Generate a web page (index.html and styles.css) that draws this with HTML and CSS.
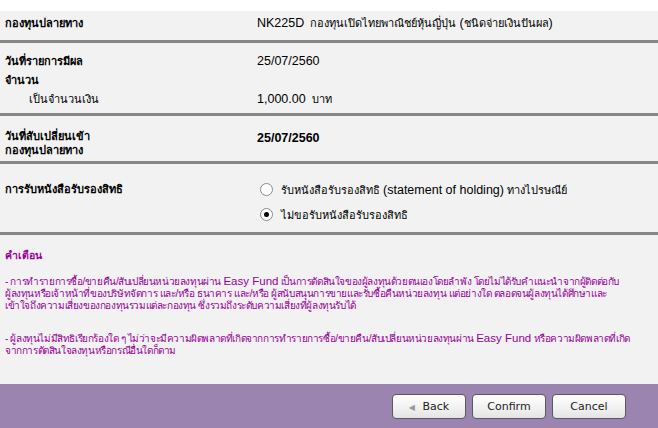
FILE: index.html
```html
<!DOCTYPE html>
<html lang="th">
<head>
  <meta charset="UTF-8" />
  <meta name="viewport" content="width=device-width, initial-scale=1" />
  <title>Easy Fund - ยืนยันการสับเปลี่ยน</title>
  <link rel="stylesheet" href="styles.css">
</head>
<body>
  <div class="page">
    <div class="row row-fund">
      <div class="label">กองทุนปลายทาง</div>
      <div class="value"><span class="latin">NK225D</span>&nbsp; กองทุนเปิดไทยพาณิชย์หุ้นญี่ปุ่น <span class="latin">(</span>ชนิดจ่ายเงินปันผล<span class="latin">)</span></div>
    </div>

    <div class="row row-amount">
      <div class="label">วันที่รายการมีผล</div>
      <div class="value latin">25/07/2560</div>
      <div class="label">จำนวน</div>
      <div class="value"></div>
      <div class="label sub">เป็นจำนวนเงิน</div>
      <div class="value"><span class="latin">1,000.00</span>&nbsp; บาท</div>
    </div>

    <div class="row row-switch">
      <div class="label">วันที่สับเปลี่ยนเข้า<br>กองทุนปลายทาง</div>
      <div class="value latin bold">25/07/2560</div>
    </div>

    <div class="row row-cert">
      <div class="label">การรับหนังสือรับรองสิทธิ</div>
      <div class="options">
        <label class="option"><span class="radio"></span>รับหนังสือรับรองสิทธิ&nbsp;<span class="latin">(statement of holding)</span>&nbsp;ทางไปรษณีย์</label>
        <label class="option"><span class="radio checked"></span>ไม่ขอรับหนังสือรับรองสิทธิ</label>
      </div>
    </div>

    <div class="warning">
      <div class="warning-title">คำเตือน</div>
      <p>- การทำรายการซื้อ/ขายคืน/สับเปลี่ยนหน่วยลงทุนผ่าน <span class="latin">Easy Fund</span> เป็นการตัดสินใจของผู้ลงทุนด้วยตนเองโดยลำพัง โดยไม่ได้รับคำแนะนำจากผู้ติดต่อกับ<br>ผู้ลงทุนหรือเจ้าหน้าที่ของบริษัทจัดการ และ/หรือ ธนาคาร และ/หรือ ผู้สนับสนุนการขายและรับซื้อคืนหน่วยลงทุน แต่อย่างใด ตลอดจนผู้ลงทุนได้ศึกษาและ<br>เข้าใจถึงความเสี่ยงของกองทุนรวมแต่ละกองทุน ซึ่งรวมถึงระดับความเสี่ยงที่ผู้ลงทุนรับได้</p>
      <p>- ผู้ลงทุนไม่มีสิทธิเรียกร้องใด ๆ ไม่ว่าจะมีความผิดพลาดที่เกิดจากการทำรายการซื้อ/ขายคืน/สับเปลี่ยนหน่วยลงทุนผ่าน <span class="latin">Easy Fund</span> หรือความผิดพลาดที่เกิด<br>จากการตัดสินใจลงทุนหรือกรณีอื่นใดก็ตาม</p>
    </div>

    <div class="footer">
      <button class="btn"><span class="arrow">&#9664;</span> Back</button>
      <button class="btn">Confirm</button>
      <button class="btn">Cancel</button>
    </div>
  </div>
</body>
</html>
```

FILE: styles.css
```css
body { margin: 0; background: #fff; font-family: "Liberation Sans", "Noto Sans", sans-serif; font-size: 11px; color: #000; }
.page { padding-top: 11px; background: #fff; }

.row {
  display: grid;
  grid-template-columns: 252px 1fr;
  background: #f2f2f2;
  border-bottom: 3px solid #878787;
  padding: 0 5px;
}
.label { font-weight: bold; line-height: 19px; }
.label.sub { font-weight: normal; padding-left: 24px; }
.value { line-height: 19px; }
.latin { font-size: 12.5px; }
.bold { font-weight: bold; }

.row-fund { padding-top: 2px; padding-bottom: 7px; }
.row-fund .label, .row-fund .value { line-height: 20px; }

.row-amount { padding-top: 9px; padding-bottom: 4px; }
.row-amount .label, .row-amount .value { line-height: 19px; }

.row-switch { padding-top: 13px; padding-bottom: 4px; }
.row-switch .label { line-height: 14px; }
.row-switch .value { line-height: 18px; }

.row-cert { padding-top: 16px; padding-bottom: 8px; }
.options { display: flex; flex-direction: column; gap: 6px; padding-left: 3px; }
.option { display: flex; align-items: center; height: 19px; }
.radio {
  width: 11px;
  height: 11px;
  border: 1px solid #8a8a8a;
  border-radius: 50%;
  background: #fff;
  margin-right: 8px;
  position: relative;
  flex: none;
}
.radio.checked::after {
  content: "";
  position: absolute;
  left: 3px;
  top: 3px;
  width: 5px;
  height: 5px;
  border-radius: 50%;
  background: #000;
}

.warning { background: #f2f2f2; color: #990099; padding: 12px 5px 27px; }
.warning-title { font-weight: bold; font-size: 10.5px; line-height: 16px; margin-bottom: 12px; }
.warning p { margin: 0 0 20px; font-size: 10px; letter-spacing: -0.4px; line-height: 12px; white-space: nowrap; }
.warning p .latin { font-size: 11.5px; letter-spacing: 0; }
.warning p:last-child { margin-bottom: 0; }

.footer {
  background: #9b85b0;
  height: 45px;
  display: flex;
  justify-content: flex-end;
  align-items: center;
  gap: 6px;
  padding-right: 32px;
}
.btn {
  width: 74px;
  height: 25px;
  border: 1px solid #5a5a5a;
  border-radius: 4px;
  background: linear-gradient(#ffffff, #f0f0f0 60%, #e4e4e4);
  font-family: "DejaVu Sans", sans-serif;
  font-size: 11px;
  font-weight: normal;
  color: #222;
  padding: 0;
}
.arrow { color: #999; font-size: 8px; margin-right: 4px; }
```
